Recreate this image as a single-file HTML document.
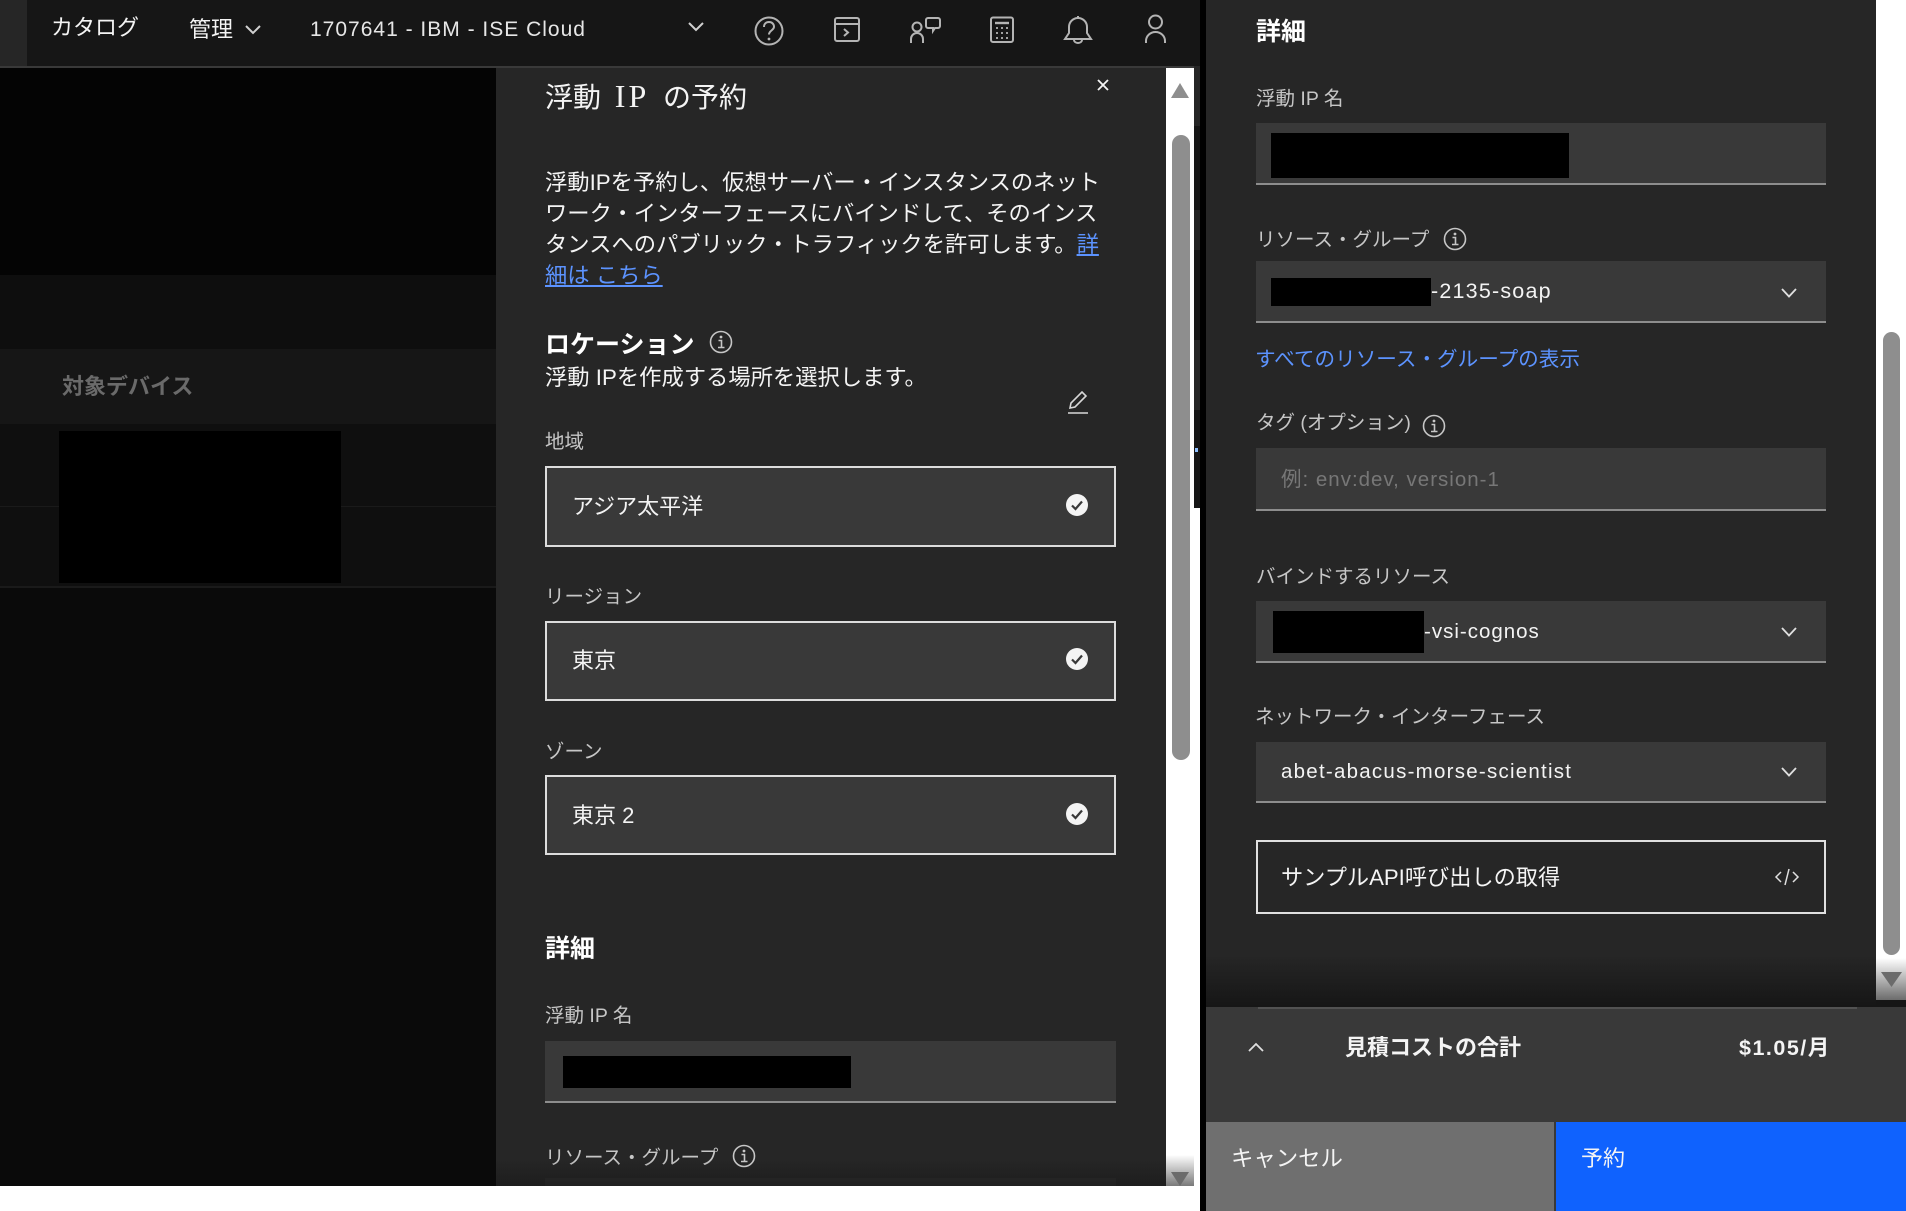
<!DOCTYPE html>
<html lang="ja">
<head>
<meta charset="utf-8">
<title>浮動 IP の予約</title>
<style>
html,body{margin:0;padding:0;width:1906px;height:1211px;overflow:hidden;background:#fff;font-family:"Liberation Sans","Noto Sans CJK JP",sans-serif;}
.b{position:absolute;display:block;}
.t{position:absolute;white-space:nowrap;height:40px;line-height:40px;color:#f4f4f4;font-size:22px;}
.l{color:#c6c6c6;font-size:19.5px;}
.h{font-weight:700;font-size:25px;color:#fff;}
.lk{color:#5c93ff;}
svg{position:absolute;left:0;top:0;}
</style>
</head>
<body>
<!-- left screenshot backgrounds -->
<div class="b" style="left:0;top:0;width:1195px;height:66px;background:#161616"></div>
<div class="b" style="left:0;top:0;width:27px;height:66px;background:#262626"></div>
<div class="b" style="left:0;top:66px;width:1195px;height:2px;background:#393939"></div>
<div class="b" style="left:0;top:68px;width:496px;height:1118px;background:#0a0a0a"></div>
<div class="b" style="left:0;top:68px;width:496px;height:207px;background:#040404"></div>
<div class="b" style="left:0;top:275px;width:496px;height:74px;background:#0e0e0e"></div>
<div class="b" style="left:0;top:349px;width:496px;height:75px;background:#161616"></div>
<div class="b" style="left:0;top:424px;width:496px;height:162px;background:#0f0f0f"></div>
<div class="b" style="left:0;top:506px;width:496px;height:1px;background:#1a1a1a"></div>
<div class="b" style="left:0;top:586px;width:496px;height:2px;background:#1a1a1a"></div>
<div class="b" style="left:59px;top:431px;width:282px;height:152px;background:#000"></div>
<div class="t" style="left:62px;top:367px;color:#6a6a6a;font-weight:700;font-size:22px">対象デバイス</div>
<!-- side strip -->
<div class="b" style="left:1194px;top:0;width:6px;height:508px;background:#161616"></div>
<div class="b" style="left:1194px;top:66px;width:6px;height:60px;background:#262626"></div>
<div class="b" style="left:1194px;top:210px;width:6px;height:40px;background:#222"></div>
<div class="b" style="left:1194px;top:340px;width:6px;height:70px;background:#262626"></div>
<div class="b" style="left:1195px;top:448px;width:3px;height:4px;background:#8fc0ff"></div>
<!-- left panel -->
<div class="b" style="left:496px;top:68px;width:670px;height:1118px;background:#262626"></div>
<div class="b" style="left:1166px;top:68px;width:28px;height:1118px;background:#fff"></div>
<div class="b" style="left:1166px;top:1155px;width:28px;height:31px;background:linear-gradient(#fff,#7a7a7a)"></div>
<div class="b" style="left:1172px;top:135px;width:18px;height:625px;border-radius:9px;background:#8e8e8e"></div>

<!-- topbar text -->
<div class="t" style="left:51px;top:8px">カタログ</div>
<div class="t" style="left:189px;top:10px">管理</div>
<div class="t" style="left:310px;top:10px;font-size:21px;letter-spacing:1px;color:#e6e6e6">1707641 - IBM - ISE Cloud</div>

<!-- left panel text -->
<div class="t" style="left:545px;top:76px;font-size:28px;word-spacing:6px;"><span>浮動</span> <span style="font-family:'Liberation Serif','Noto Sans CJK JP',serif;font-size:32px;letter-spacing:3px">IP</span> <span>の予約</span></div>
<div class="t" style="left:545px;top:163px;font-size:22.3px">浮動IPを予約し、仮想サーバー・インスタンスのネット</div>
<div class="t" style="left:545px;top:194px;font-size:22.3px">ワーク・インターフェースにバインドして、そのインス</div>
<div class="t" style="left:545px;top:225px;font-size:22.3px">タンスへのパブリック・トラフィックを許可します。<span class="lk" style="text-decoration:underline">詳</span></div>
<div class="t lk" style="left:545px;top:256px;font-size:22.3px;text-decoration:underline">細は こちら</div>

<div class="t h" style="left:545px;top:325px">ロケーション</div>
<div class="t" style="left:545px;top:358px;font-size:22.3px">浮動 IPを作成する場所を選択します。</div>

<div class="t l" style="left:545px;top:422px">地域</div>
<div class="b" style="left:545px;top:466px;width:567px;height:77px;border:2px solid #dcdcdc;background:#393939"></div>
<div class="t" style="left:572px;top:487px">アジア太平洋</div>

<div class="t l" style="left:545px;top:577px">リージョン</div>
<div class="b" style="left:545px;top:621px;width:567px;height:76px;border:2px solid #dcdcdc;background:#393939"></div>
<div class="t" style="left:572px;top:641px">東京</div>

<div class="t l" style="left:545px;top:732px">ゾーン</div>
<div class="b" style="left:545px;top:775px;width:567px;height:76px;border:2px solid #dcdcdc;background:#393939"></div>
<div class="t" style="left:572px;top:796px">東京 2</div>

<div class="t h" style="left:545px;top:929px">詳細</div>
<div class="t l" style="left:545px;top:996px">浮動 IP 名</div>
<div class="b" style="left:545px;top:1041px;width:571px;height:60px;border-bottom:2px solid #8d8d8d;background:#393939"></div>
<div class="b" style="left:563px;top:1056px;width:288px;height:32px;background:#000"></div>
<div class="t l" style="left:545px;top:1138px">リソース・グループ</div>
<div class="b" style="left:545px;top:1178px;width:571px;height:8px;background:#2e2e2e"></div>
<div class="b" style="left:496px;top:1160px;width:670px;height:26px;background:linear-gradient(rgba(22,22,22,0),rgba(22,22,22,.55))"></div>

<!-- white bottom / black divider -->
<div class="b" style="left:0;top:1186px;width:1200px;height:25px;background:#fff"></div>
<div class="b" style="left:1200px;top:0;width:6px;height:1211px;background:#000"></div>

<!-- right panel -->
<div class="b" style="left:1206px;top:0;width:670px;height:1007px;background:#262626"></div>
<div class="b" style="left:1876px;top:0;width:30px;height:1000px;background:#fff"></div>
<div class="b" style="left:1876px;top:958px;width:30px;height:42px;background:linear-gradient(#fff,#6c6c6c)"></div>
<div class="b" style="left:1876px;top:1000px;width:30px;height:7px;background:#161616"></div>
<div class="b" style="left:1883px;top:332px;width:17px;height:623px;border-radius:9px;background:#8e8e8e"></div>
<div class="b" style="left:1206px;top:955px;width:670px;height:52px;background:linear-gradient(rgba(22,22,22,0),#161616)"></div>

<div class="t h" style="left:1256px;top:12px">詳細</div>
<div class="t l" style="left:1256px;top:79px">浮動 IP 名</div>
<div class="b" style="left:1256px;top:123px;width:570px;height:60px;border-bottom:2px solid #8d8d8d;background:#393939"></div>
<div class="b" style="left:1271px;top:133px;width:298px;height:45px;background:#000"></div>

<div class="t l" style="left:1256px;top:220px">リソース・グループ</div>
<div class="b" style="left:1256px;top:261px;width:570px;height:60px;border-bottom:2px solid #8d8d8d;background:#393939"></div>
<div class="b" style="left:1271px;top:278px;width:160px;height:28px;background:#000"></div>
<div class="t" style="left:1431px;top:271px;font-size:21.5px;letter-spacing:1.2px">-2135-soap</div>
<div class="t lk" style="left:1255px;top:340px;font-size:20.6px">すべてのリソース・グループの表示</div>

<div class="t l" style="left:1256px;top:403px">タグ (オプション)</div>
<div class="b" style="left:1256px;top:448px;width:570px;height:61px;border-bottom:2px solid #8d8d8d;background:#393939"></div>
<div class="t" style="left:1281px;top:460px;font-size:20.5px;color:#777;letter-spacing:1px">例: env:dev, version-1</div>

<div class="t l" style="left:1256px;top:557px">バインドするリソース</div>
<div class="b" style="left:1256px;top:601px;width:570px;height:60px;border-bottom:2px solid #8d8d8d;background:#393939"></div>
<div class="b" style="left:1273px;top:611px;width:151px;height:42px;background:#000"></div>
<div class="t" style="left:1424px;top:612px;font-size:20.5px;letter-spacing:1px">-vsi-cognos</div>

<div class="t l" style="left:1255px;top:697px">ネットワーク・インターフェース</div>
<div class="b" style="left:1256px;top:742px;width:570px;height:59px;border-bottom:2px solid #8d8d8d;background:#393939"></div>
<div class="t" style="left:1281px;top:752px;font-size:20.5px;letter-spacing:1.25px">abet-abacus-morse-scientist</div>

<div class="b" style="left:1256px;top:840px;width:566px;height:70px;border:2px solid #e0e0e0"></div>
<div class="t" style="left:1281px;top:858px;font-size:22.2px">サンプルAPI呼び出しの取得</div>

<!-- footer -->
<div class="b" style="left:1206px;top:1007px;width:700px;height:115px;background:#393939"></div>
<div class="b" style="left:1258px;top:1007px;width:599px;height:2px;background:#525252"></div>
<div class="t" style="left:1345px;top:1028px;font-weight:700">見積コストの合計</div>
<div class="t" style="left:1739px;top:1028px;font-weight:700;font-size:21.5px;letter-spacing:1.5px">$1.05/月</div>
<div class="b" style="left:1206px;top:1122px;width:348px;height:89px;background:#6f6f6f"></div>
<div class="b" style="left:1554px;top:1122px;width:2px;height:89px;background:#393939"></div>
<div class="b" style="left:1556px;top:1122px;width:350px;height:89px;background:#0f62fe"></div>
<div class="t" style="left:1231px;top:1139px;font-size:22.4px">キャンセル</div>
<div class="t" style="left:1581px;top:1139px">予約</div>

<!-- icons overlay -->
<svg width="1906" height="1211" viewBox="0 0 1906 1211" fill="none">
  <defs>
    <g id="info"><circle cx="0" cy="0" r="10.5" stroke="#c6c6c6" stroke-width="1.6"/><circle cx="0" cy="-5" r="1.4" fill="#c6c6c6"/><path d="M-2.5-1.5H.5V5.5M-3 5.5H3.5" stroke="#c6c6c6" stroke-width="1.6"/></g>
    <g id="chk"><circle cx="0" cy="0" r="11" fill="#f4f4f4"/><path d="M-5 0.5L-1.5 4 5-3.5" stroke="#393939" stroke-width="2.2"/></g>
    <path id="chev" d="M-7-4L0 3.5 7-4" stroke="#e0e0e0" stroke-width="1.8"/>
  </defs>
  <g stroke="#b4b4b4" stroke-width="2">
    <!-- top chevrons -->
    <path d="M246 26l7 7 7-7M689 23l7 7 7-7" stroke="#d0d0d0"/>
    <!-- help -->
    <circle cx="769" cy="31" r="13.5"/>
    <path d="M764 27c0-3 2-5 5-5s5 2 5 4.800c0 3.500-5 3.700-5 7.700"/>
    <circle cx="769" cy="39" r="1.400" fill="#b4b4b4" stroke="none"/>
    <!-- terminal -->
    <rect x="835" y="18" width="24" height="23" rx="2"/>
    <path d="M835 24h24M844 29l4 3.500-4 3.500"/>
    <!-- people chat -->
    <circle cx="917" cy="27" r="4.500"/>
    <path d="M911 43v-4a6 6 0 0 1 12 0v4"/>
    <path d="M928 18h10a2 2 0 0 1 2 2v6a2 2 0 0 1-2 2h-3l-2 3v-3h-5a2 2 0 0 1-2-2v-6a2 2 0 0 1 2-2z"/>
    <!-- calculator -->
    <rect x="991" y="17.500" width="22" height="24.500" rx="2"/>
    <path d="M995 23h14" stroke-width="2.400"/>
    <path d="M996 28h2M1001 28h2M1006 28h2M996 33h2M1001 33h2M1006 33h2M996 38h2M1001 38h2M1006 38h2" stroke-width="1.800"/>
    <!-- bell -->
    <path d="M1078 16v3M1069 33v-6a9 9 0 0 1 18 0v6l4 6h-26z"/>
    <path d="M1074 40a4 3 0 0 0 8 0"/>
    <!-- user -->
    <circle cx="1155.500" cy="22" r="6.500"/>
    <path d="M1146 43v-2a9.500 9 0 0 1 19 0v2"/>
  </g>
  <!-- close -->
  <path d="M1098 80l10 10M1108 80l-10 10" stroke="#f4f4f4" stroke-width="1.800"/>
  <!-- scroll arrows -->
  <path d="M1180 83l9 15h-18z" fill="#8e8e8e"/>
  <path d="M1171 1172h18l-9 14z" fill="#6b6b6b"/>
  <path d="M1881 972h21l-10.500 15z" fill="#6b6b6b"/>
  <!-- info icons -->
  <use href="#info" x="721" y="342"/>
  <use href="#info" x="744" y="1156"/>
  <use href="#info" x="1455" y="239"/>
  <use href="#info" x="1434" y="426"/>
  <!-- pencil -->
  <path d="M1068 413h20M1070 408l1-5 11-11 4 4-11 11z" stroke="#d8d8d8" stroke-width="1.600"/>
  <!-- checks -->
  <use href="#chk" x="1077" y="505"/>
  <use href="#chk" x="1077" y="659"/>
  <use href="#chk" x="1077" y="814"/>
  <!-- right chevrons -->
  <use href="#chev" x="1789" y="293"/>
  <use href="#chev" x="1789" y="632"/>
  <use href="#chev" x="1789" y="772"/>
  <!-- code icon -->
  <path d="M1781 872l-5 5 5 5M1793 872l5 5-5 5M1789 869l-4 16" stroke="#e0e0e0" stroke-width="1.500"/>
  <!-- footer chevron -->
  <path d="M1249 1051l7-7 7 7" stroke="#e0e0e0" stroke-width="1.800"/>
</svg>
</body>
</html>
